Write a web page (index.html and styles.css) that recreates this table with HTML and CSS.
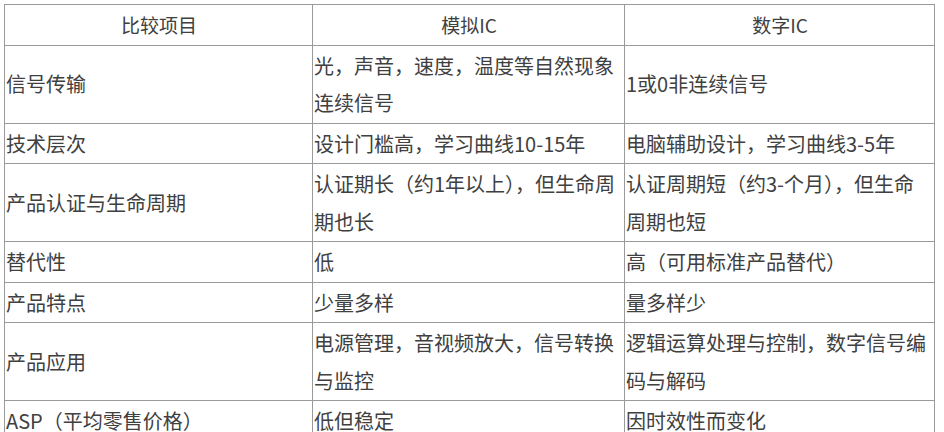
FILE: index.html
```html
<!DOCTYPE html>
<html lang="zh-CN">
<head>
<meta charset="utf-8">
<title>模拟IC与数字IC比较</title>
<link rel="stylesheet" href="styles.css">
</head>
<body>
<table class="cmp">
  <colgroup>
    <col class="c1">
    <col class="c2">
    <col class="c3">
  </colgroup>
  <thead>
    <tr><th>比较项目</th><th>模拟IC</th><th>数字IC</th></tr>
  </thead>
  <tbody>
    <tr><td>信号传输</td><td>光，声音，速度，温度等自然现象连续信号</td><td>1或0非连续信号</td></tr>
    <tr><td>技术层次</td><td>设计门槛高，学习曲线10-15年</td><td>电脑辅助设计，学习曲线3-5年</td></tr>
    <tr><td>产品认证与生命周期</td><td>认证期长（约1年以上），但生命周期也长</td><td>认证周期短（约3-个月），但生命周期也短</td></tr>
    <tr><td>替代性</td><td>低</td><td>高（可用标准产品替代）</td></tr>
    <tr><td>产品特点</td><td>少量多样</td><td>量多样少</td></tr>
    <tr><td>产品应用</td><td>电源管理，音视频放大，信号转换与监控</td><td>逻辑运算处理与控制，数字信号编码与解码</td></tr>
    <tr><td>ASP（平均零售价格）</td><td>低但稳定</td><td>因时效性而变化</td></tr>
  </tbody>
</table>
</body>
</html>
```

FILE: styles.css
```css
html, body {
  margin: 0;
  padding: 0;
  background: #ffffff;
}

body {
  font-family: "Noto Sans CJK SC", "Noto Sans", sans-serif;
  color: #404040;
  font-size: 20px;
}

.cmp {
  border-collapse: collapse;
  table-layout: fixed;
  width: 930px;
  margin: 4px 0 0 4px;
}

.cmp .c1 { width: 308px; }
.cmp .c2 { width: 312px; }
.cmp .c3 { width: 310px; }

.cmp th,
.cmp td {
  border: 1px solid #9a9a9a;
  line-height: 37.5px;
  padding: 1px 0 1px 1px;
  vertical-align: middle;
  word-break: break-all;
}

.cmp th {
  font-weight: normal;
  text-align: center;
  font-size: 19px;
}

.cmp td {
  text-align: left;
}
```
